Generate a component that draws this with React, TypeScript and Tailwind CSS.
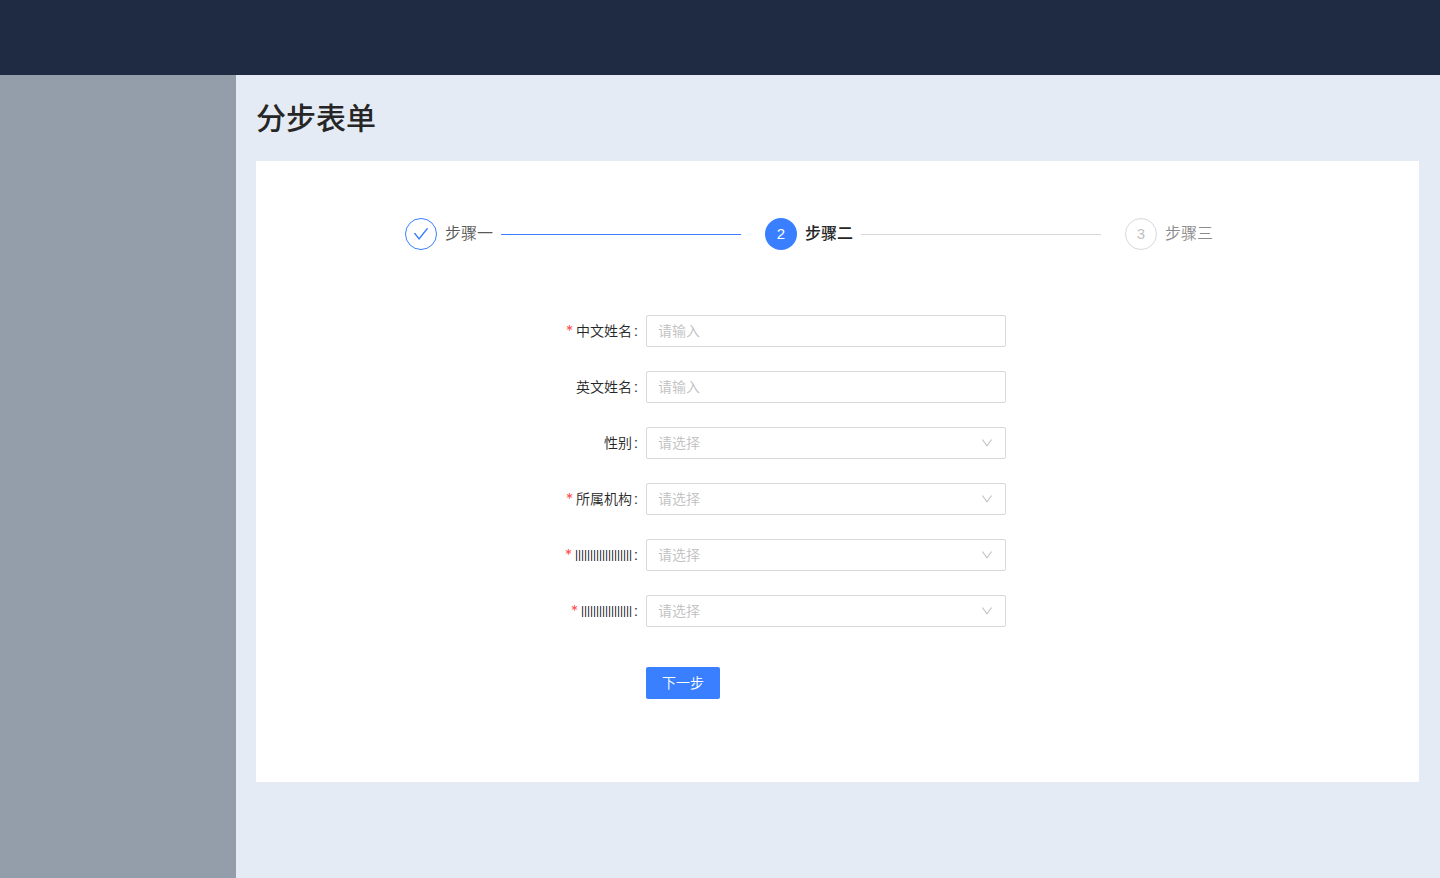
import React from "react";

type Field = {
  id: string;
  label: string;
  kind: "input" | "select";
  required?: boolean;
  bars?: boolean;
};

const fields: Field[] = [
  { id: "cn-name", label: "中文姓名", kind: "input", required: true },
  { id: "en-name", label: "英文姓名", kind: "input" },
  { id: "gender", label: "性别", kind: "select" },
  { id: "org", label: "所属机构", kind: "select", required: true },
  { id: "extra-a", label: "|||||||||||||||||||", kind: "select", required: true, bars: true },
  { id: "extra-b", label: "|||||||||||||||||", kind: "select", required: true, bars: true },
];

const control =
  "block h-8 w-full rounded-xs border border-[#d9d9d9] bg-white px-[11px] text-sm font-[350] outline-none focus:border-[#3a7fff]";

function FormRow({ field }: { field: Field }) {
  return (
    <div className="grid grid-cols-[382px_minmax(0,360px)] gap-2">
      <label htmlFor={field.id} className="flex h-8 items-center justify-end text-sm text-[#262626]">
        {field.required && <span className="mr-[3px] font-['Inter',sans-serif] text-sm text-[#ff4d4f]">*</span>}
        {field.bars ? (
          <span className="font-['Lato',sans-serif] text-xs text-black">{field.label}</span>
        ) : (
          <span className="font-[350]">{field.label}</span>
        )}
        <span className="ml-0.5">:</span>
      </label>
      {field.kind === "input" ? (
        <input id={field.id} type="text" placeholder="请输入" className={control + " placeholder:text-[#bfbfbf]"} />
      ) : (
        <div className="relative">
          <select id={field.id} defaultValue="" className={control + " appearance-none text-[#bfbfbf]"}>
            <option value="">请选择</option>
          </select>
          <svg
            viewBox="64 64 896 896"
            className="pointer-events-none absolute top-1/2 right-[13px] size-3 -translate-y-1/2 fill-[#bfbfbf]"
            aria-hidden="true"
          >
            <path d="M884 256h-75c-5.1 0-9.900 2.500-12.900 6.600L512 654.200 227.900 262.600c-3-4.100-7.800-6.600-12.900-6.600h-75c-6.500 0-10.300 7.400-6.500 12.700l352.600 486.100c12.800 17.600 39 17.600 51.700 0l352.600-486.100c3.900-5.300.1-12.700-6.400-12.700z" />
          </svg>
        </div>
      )}
    </div>
  );
}

export default function App() {
  return (
    <div className="flex min-h-screen flex-col bg-[#e5ebf4] font-['Liberation_Sans','Noto_Sans_CJK_SC',sans-serif] text-[#262626]">
      <header className="h-[75px] shrink-0 bg-[#1e2b42]" />
      <div className="flex flex-1">
        <aside className="w-[236px] shrink-0 bg-[#949eaa]" />
        <main className="min-w-0 flex-1 pt-5 pr-[21px] pl-5">
          <h1 className="text-[30px] leading-[48px] font-medium">分步表单</h1>
          <section className="mt-[18px] bg-white pt-[57px] pb-[83px]">
            <ol className="ml-[149px] flex max-w-[808px] gap-6 text-base leading-8">
              <li className="flex flex-1 items-center gap-2">
                <span className="flex size-8 items-center justify-center rounded-full border border-[#3a7fff]">
                  <svg viewBox="64 64 896 896" className="size-4 fill-[#3a7fff]" aria-hidden="true">
                    <path d="M912 190h-69.900c-9.800 0-19.100 4.500-25.100 12.200L404.700 724.500 207 474a32 32 0 0 0-25.100-12.200H112c-6.700 0-10.400 7.700-6.300 12.900l273.900 347c12.800 16.200 37.400 16.200 50.300 0l488.400-618.900c4.100-5.100.4-12.800-6.300-12.800z" />
                  </svg>
                </span>
                <span className="font-[350] text-[#595959]">步骤一</span>
                <span className="h-px flex-1 bg-[#3a7fff]" />
              </li>
              <li className="flex flex-1 items-center gap-2" aria-current="step">
                <span className="flex size-8 items-center justify-center rounded-full bg-[#3a7fff] text-[15px] text-white">2</span>
                <span className="font-medium">步骤二</span>
                <span className="h-px flex-1 bg-[#d9d9d9]" />
              </li>
              <li className="flex items-center gap-2">
                <span className="flex size-8 items-center justify-center rounded-full border border-[#d9d9d9] text-[15px] text-[#bfbfbf]">3</span>
                <span className="font-[350] text-[#8c8c8c]">步骤三</span>
              </li>
            </ol>
            <form className="mt-[65px]" onSubmit={(e) => e.preventDefault()}>
              <div className="flex flex-col gap-6">
                {fields.map((f) => (
                  <FormRow key={f.id} field={f} />
                ))}
              </div>
              <button type="submit" className="mt-10 ml-[390px] block h-8 rounded-xs bg-[#3a7fff] px-4 text-sm font-[350] text-white">
                下一步
              </button>
            </form>
          </section>
        </main>
      </div>
    </div>
  );
}
